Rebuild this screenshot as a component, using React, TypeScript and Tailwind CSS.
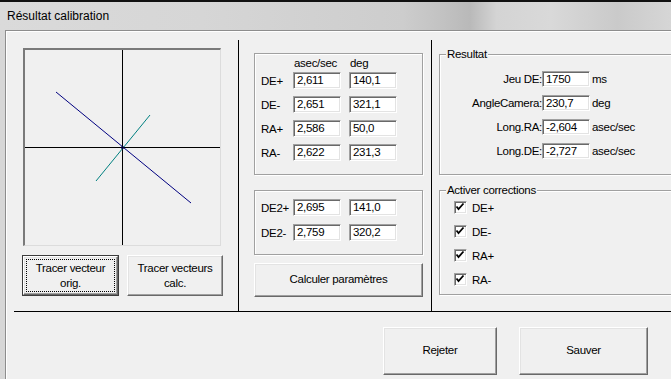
import React from 'react';

const raised =
  'border border-t-white border-l-white border-r-[#696969] border-b-[#696969] shadow-[inset_-1px_-1px_0_#a0a0a0,inset_1px_1px_0_#e3e3e3] bg-[#f0f0f0]';
const sunken =
  'bg-white border border-t-[#a0a0a0] border-l-[#a0a0a0] border-r-white border-b-white shadow-[inset_1px_1px_0_#696969,inset_-1px_-1px_0_#e3e3e3]';
const etched = 'border border-[#a0a0a0] shadow-[inset_1px_1px_0_#fff,1px_1px_0_#fff]';

function Field({ value, h = 'h-[17px]' }: { value: string; h?: string }) {
  return (
    <div className={`w-[48px] shrink-0 ${h} ${sunken} pl-[3px] flex items-center leading-[13px]`}>
      {value}
    </div>
  );
}

function Check({ label }: { label: string }) {
  return (
    <div className="flex items-center h-[13px]">
      <div className={`w-[13px] h-[13px] shrink-0 ${sunken}`}>
        <svg width="11" height="11" viewBox="0 0 11 11" className="block">
          <polyline points="1.5,4.5 3.5,7 8.5,1.5" fill="none" stroke="#000" strokeWidth="1.8" />
        </svg>
      </div>
      <span className="ml-[5px] leading-[14px]">{label}</span>
    </div>
  );
}

function Plot() {
  return (
    <div className="ml-[9px] mt-[8px] w-[198px] h-[198px] border-t-2 border-l-2 border-b border-r border-t-[#7a7a7a] border-l-[#7a7a7a] border-b-[#dcdcdc] border-r-[#dcdcdc] bg-[#f0f0f0]">
      <svg width="195" height="195" viewBox="26 50 195 195" className="block">
        <line x1="123.5" y1="50" x2="123.5" y2="245" stroke="#000" strokeWidth="1" />
        <line x1="26" y1="147.5" x2="221" y2="147.5" stroke="#000" strokeWidth="1" />
        <line x1="57" y1="92" x2="192" y2="203" stroke="#000080" strokeWidth="1" />
        <line x1="151" y1="115" x2="97" y2="181" stroke="#008080" strokeWidth="1" />
        <circle cx="123.5" cy="147.5" r="1.6" fill="#00003a" />
      </svg>
    </div>
  );
}

const vectors = [
  ['DE+', '2,611', '140,1'],
  ['DE-', '2,651', '321,1'],
  ['RA+', '2,586', '50,0'],
  ['RA-', '2,622', '231,3'],
];

const vectors2 = [
  ['DE2+', '2,695', '141,0'],
  ['DE2-', '2,759', '320,2'],
];

const results = [
  ['Jeu DE:', '1750', 'ms'],
  ['AngleCamera:', '230,7', 'deg'],
  ['Long.RA:', '-2,604', 'asec/sec'],
  ['Long.DE:', '-2,727', 'asec/sec'],
];

export default function App() {
  return (
    <div className="w-[671px] h-[379px] overflow-hidden bg-[#f0f0f0] text-black font-['Liberation_Sans',Arial,sans-serif] flex flex-col">
      {/* title bar */}
      <div className="h-[30px] shrink-0 border-t-2 border-t-[#111] bg-[linear-gradient(90deg,#dadada_0%,#d6d6d6_30%,#cdcdcd_60%,#c2c2c2_66%,#b9b9b9_70%,#d4d4d4_74%,#d9d9d9_82%,#cacaca_92%,#d6d6d6_100%)] flex items-center pl-[7px] text-[12px]">
        Résultat calibration
      </div>

      <div className="flex-1 flex min-w-0">
        <div className="w-[6px] shrink-0 bg-[#d7d7d7] border-r border-r-[#8d8d8d]" />
        <div className="flex-1 min-w-0 overflow-hidden border-t border-t-[#8d8d8d] shadow-[inset_1px_1px_0_#fff] flex flex-col text-[11.5px] tracking-[-0.3px]">
          {/* panels */}
          <div className="mt-[9px] ml-[8px] h-[272px] shrink-0 border-b border-b-black flex">
            {/* left: plot */}
            <div className="w-[225px] shrink-0 border-r border-r-black flex flex-col">
              <Plot />
              <div className="mt-[9px] ml-[8px] flex gap-[8px]">
                <div className="w-[97px] h-[41px] border border-[#3c3c3c]">
                  <div className={`h-full ${raised} p-[2px]`}>
                    <div className="h-full border border-dotted border-black flex flex-col items-center justify-center leading-[15px]">
                      <span>Tracer vecteur</span>
                      <span>orig.</span>
                    </div>
                  </div>
                </div>
                <div className={`w-[96px] h-[41px] ${raised} flex flex-col items-center justify-center leading-[15px]`}>
                  <span>Tracer vecteurs</span>
                  <span>calc.</span>
                </div>
              </div>
            </div>

            {/* middle: vectors */}
            <div className="w-[193px] shrink-0 border-r border-r-black pl-[15px]">
              <div className={`mt-[13px] w-[169px] h-[122px] ${etched} pl-[6px] pt-[2px]`}>
                <div className="flex leading-[14px]">
                  <span className="w-[33px]" />
                  <span className="w-[56px]">asec/sec</span>
                  <span>deg</span>
                </div>
                <div className="mt-[2px] flex flex-col gap-[7px]">
                  {vectors.map(([l, a, d]) => (
                    <div key={l} className="flex items-center">
                      <span className="w-[32px] leading-[14px]">{l}</span>
                      <Field value={a} />
                      <div className="w-[8px]" />
                      <Field value={d} />
                    </div>
                  ))}
                </div>
              </div>

              <div className={`mt-[15px] w-[169px] h-[65px] ${etched} pl-[6px] pt-[8px] flex flex-col gap-[8px]`}>
                {vectors2.map(([l, a, d]) => (
                  <div key={l} className="flex items-center">
                    <span className="w-[32px] leading-[14px]">{l}</span>
                    <Field value={a} />
                    <div className="w-[8px]" />
                    <Field value={d} />
                  </div>
                ))}
              </div>

              <div className={`mt-[8px] w-[169px] h-[34px] ${raised} flex items-center justify-center`}>
                Calculer paramètres
              </div>
            </div>

            {/* right: results */}
            <div className="flex-1 min-w-0 pl-[7px]">
              <div className={`relative mt-[14px] w-[240px] h-[121px] ${etched} pt-[16px] flex flex-col gap-[8px]`}>
                <span className="absolute left-[6px] -top-[8px] px-[1px] bg-[#f0f0f0] leading-[14px]">Resultat</span>
                {results.map(([l, v, u]) => (
                  <div key={l} className="flex items-center">
                    <span className="w-[102px] shrink-0 text-right leading-[14px]">{l}</span>
                    <Field value={v} h="h-[16px]" />
                    <span className="ml-[2px] leading-[14px]">{u}</span>
                  </div>
                ))}
              </div>

              <div className={`relative mt-[15px] w-[240px] h-[105px] ${etched} pt-[10px] pl-[14px] flex flex-col gap-[11px]`}>
                <span className="absolute left-[6px] -top-[8px] px-[1px] bg-[#f0f0f0] leading-[14px]">Activer corrections</span>
                {['DE+', 'DE-', 'RA+', 'RA-'].map((l) => (
                  <Check key={l} label={l} />
                ))}
              </div>
            </div>
          </div>

          {/* bottom buttons */}
          <div className="flex justify-end pt-[15px] pr-[23px] gap-[22px]">
            <div className={`w-[114px] h-[48px] shrink-0 ${raised} flex items-center justify-center`}>Rejeter</div>
            <div className={`w-[129px] h-[48px] shrink-0 ${raised} flex items-center justify-center`}>Sauver</div>
          </div>
        </div>
      </div>
    </div>
  );
}
